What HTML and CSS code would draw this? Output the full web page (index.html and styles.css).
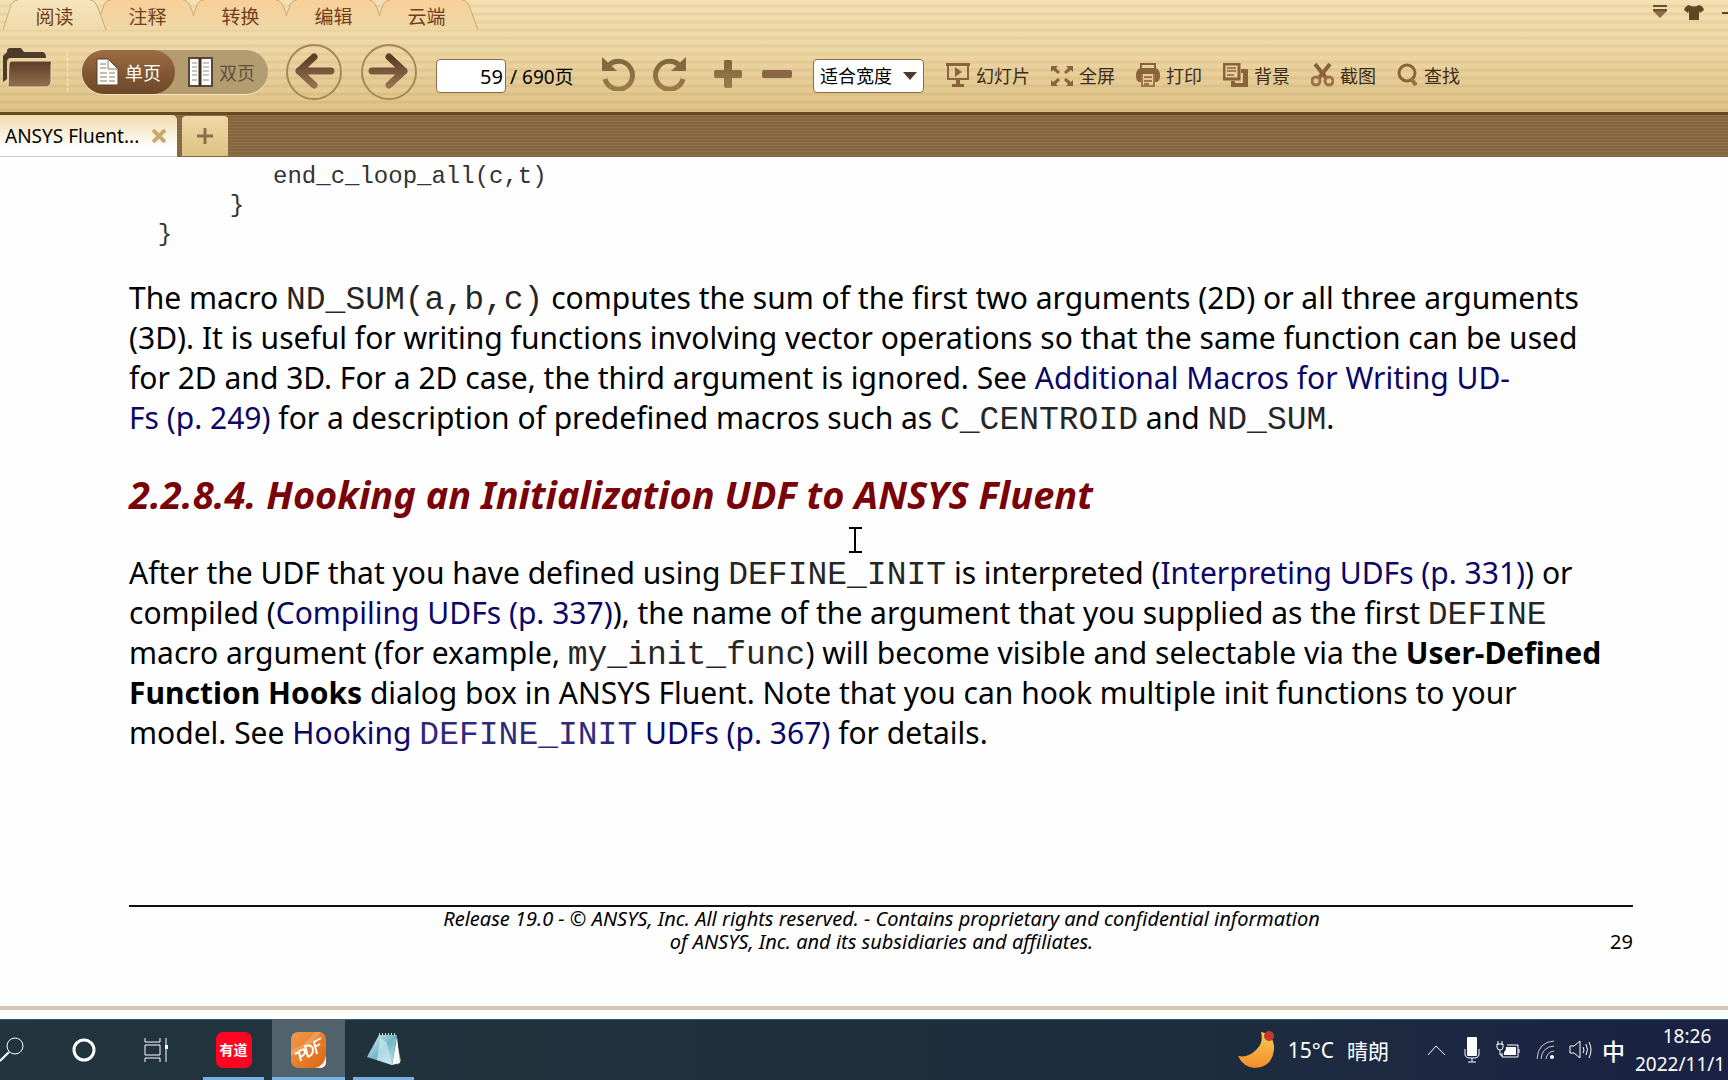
FILE: index.html
```html
<!DOCTYPE html>
<html lang="zh-CN">
<head>
<meta charset="utf-8">
<meta name="viewport" content="width=device-width, initial-scale=1">
<title>ANSYS Fluent UDF Manual</title>
<link rel="stylesheet" href="styles.css">
</head>
<body>
<svg class="defs" aria-hidden="true">
  <defs>
    <linearGradient id="brown" x1="0" y1="0" x2="0" y2="1"><stop offset="0" stop-color="#5a3d26"/><stop offset="1" stop-color="#94704f"/></linearGradient>
    <linearGradient id="olive" x1="0" y1="0" x2="0" y2="1"><stop offset="0" stop-color="#80673c"/><stop offset="1" stop-color="#9a7b49"/></linearGradient>
    <linearGradient id="tabOn" x1="0" y1="0" x2="0" y2="1"><stop offset="0" stop-color="#f6e5bb"/><stop offset="1" stop-color="#efdaab"/></linearGradient>
    <linearGradient id="tabOff" x1="0" y1="0" x2="0" y2="1"><stop offset="0" stop-color="#f8cf98"/><stop offset="1" stop-color="#eed7a6"/></linearGradient>
    <linearGradient id="moon" x1="0" y1="0" x2="0" y2="1"><stop offset="0" stop-color="#f3cf50"/><stop offset="1" stop-color="#f58a2c"/></linearGradient>
    <linearGradient id="pdf" x1="0" y1="0" x2="1" y2="1"><stop offset="0" stop-color="#f19a4a"/><stop offset="1" stop-color="#dd6413"/></linearGradient>
    <linearGradient id="note" x1="0" y1="0" x2="1" y2="1"><stop offset="0" stop-color="#e4f5f8"/><stop offset=".5" stop-color="#71b7c8"/><stop offset="1" stop-color="#c9e8ee"/></linearGradient>
  </defs>
</svg>

<header class="ribbon">
  <div class="menu">
    <nav class="menu-tabs">
      <button class="menu-tab menu-tab-on"><svg class="tab-shape" viewBox="0 0 106 30"><path fill="url(#tabOn)" d="M0 30L7 8Q9 0 15 0H87Q92 0 95 8L103 30Z"/><path class="tab-edge" d="M0 30L7 8Q9 0 15 0M87 0Q92 0 95 8L103 30"/></svg><span>阅读</span></button>
      <button class="menu-tab"><svg class="tab-shape" viewBox="0 0 106 30"><path fill="url(#tabOff)" d="M0 30L7 8Q9 0 15 0H87Q92 0 95 8L103 30Z"/><path class="tab-edge" d="M4 16L7 8Q9 0 15 0M87 0Q92 0 95 8L103 30"/></svg><span>注释</span></button>
      <button class="menu-tab"><svg class="tab-shape" viewBox="0 0 106 30"><path fill="url(#tabOff)" d="M0 30L7 8Q9 0 15 0H87Q92 0 95 8L103 30Z"/><path class="tab-edge" d="M4 16L7 8Q9 0 15 0M87 0Q92 0 95 8L103 30"/></svg><span>转换</span></button>
      <button class="menu-tab"><svg class="tab-shape" viewBox="0 0 106 30"><path fill="url(#tabOff)" d="M0 30L7 8Q9 0 15 0H87Q92 0 95 8L103 30Z"/><path class="tab-edge" d="M4 16L7 8Q9 0 15 0M87 0Q92 0 95 8L103 30"/></svg><span>编辑</span></button>
      <button class="menu-tab"><svg class="tab-shape" viewBox="0 0 106 30"><path fill="url(#tabOff)" d="M0 30L7 8Q9 0 15 0H87Q92 0 95 8L103 30Z"/><path class="tab-edge" d="M4 16L7 8Q9 0 15 0M87 0Q92 0 95 8L103 30"/></svg><span>云端</span></button>
    </nav>
    <div class="window-tools">
      <button aria-label="菜单"><svg width="14" height="14"><path fill="#6b5030" d="M0 0h14v2H0zM0 4h14v2H0z"/><path fill="#8a6c49" d="M0 6h14L7 13z"/></svg></button>
      <button aria-label="皮肤"><svg width="20" height="15"><path fill="#604624" d="M5 0Q10 3 15 0Q19 1 20 5L16 8L15 6V15H5V6L4 8L0 5Q1 1 5 0Z"/></svg></button>
      <button aria-label="最小化"><svg width="12" height="14"><path fill="#604624" d="M1 7h11v2H1z"/></svg></button>
    </div>
  </div>

  <div class="toolbar">
    <button class="open" aria-label="打开"><svg width="50" height="40"><path fill="#4f3b2a" d="M0 34V8L4 4V2Q5 0 7 0H18L21 4H40Q43 5 43 10H8Q4 10 4 14V31Z"/><path fill="url(#brown)" stroke="#f1dcb0" d="M6 16Q6 13 9 13H48Q49 13 48 17V34Q48 38 44 39H5Z"/></svg></button>
    <span class="divider"></span>
    <div class="pages">
      <button class="page-mode page-mode-on"><svg width="23" height="28"><path fill="#fff" stroke="#5c4128" d="M1 1H12L22 11V27H1Z"/><path fill="none" stroke="#8b765e" d="M12 1V11H22M4 6H10M4 10H10M4 15H11M13 15H19M4 19H11M13 19H19M4 23H11M13 23H19"/></svg>单页</button>
      <button class="page-mode"><svg width="25" height="30"><path fill="#fff" stroke="#5c4534" stroke-width="2" d="M1 1H24V29H1Z"/><path stroke="#403022" stroke-width="3" d="M12 1V29"/><path stroke="#9b8b76" d="M4 6H9M4 10H9M4 14H9M4 18H9M4 23H9M15 6H21M15 10H21M15 14H21M15 18H21M15 23H21"/></svg>双页</button>
    </div>
    <button class="turn" aria-label="上一页"><svg width="58" height="58"><circle cx="29" cy="29" r="27" fill="none" stroke="#a5875a" stroke-width="2"/><path fill="none" stroke="url(#brown)" stroke-width="7" stroke-linecap="round" stroke-linejoin="round" d="M29 14L14 28L29 42M14 28L46 28.1"/></svg></button>
    <button class="turn turn-next" aria-label="下一页"><svg width="58" height="58"><circle cx="29" cy="29" r="27" fill="none" stroke="#a5875a" stroke-width="2"/><path fill="none" stroke="url(#brown)" stroke-width="7" stroke-linecap="round" stroke-linejoin="round" d="M29 14L44 28L29 42M44 28L12 28.1"/></svg></button>
    <label class="page-box"><input type="text" value="59" aria-label="页码"><span>/ 690页</span></label>
    <div class="edit">
      <button aria-label="逆时针旋转"><svg width="34" height="34"><path fill="none" stroke="url(#olive)" stroke-width="5" d="M7 8A14 14 0 1 1 3 22"/><path fill="#83683f" d="M0 0L15 14H0Z"/></svg></button>
      <button class="redo" aria-label="顺时针旋转"><svg width="34" height="34"><path fill="none" stroke="url(#olive)" stroke-width="5" d="M27 8A14 14 0 1 0 31 22"/><path fill="#83683f" d="M34 0L19 14H34Z"/></svg></button>
      <button class="plus" aria-label="放大"><svg width="28" height="28"><path fill="url(#olive)" d="M10 1Q10 0 12 0H16Q18 0 18 1V10H26Q28 10 28 12V16Q28 18 26 18H18V27Q18 28 16 28H12Q10 28 10 26V18H2Q0 18 0 16V12Q0 10 2 10H10Z"/></svg></button>
      <button class="minus" aria-label="缩小"><svg width="30" height="28"><rect y="10" width="30" height="8" rx="2" fill="#896746"/></svg></button>
    </div>
    <div class="fit"><select aria-label="缩放"><option>适合宽度</option></select><svg width="14" height="8"><path fill="#4c3a2c" d="M0 0H14L7 8Z"/></svg></div>
    <div class="actions">
      <button><svg width="24" height="24"><path fill="#8a633c" d="M0 0H24V3H0ZM10 17H14V21H18V24H6V21H10Z"/><path fill="none" stroke="#8a633c" stroke-width="2" d="M2 3V16H22V3"/><path fill="#8a633c" d="M9 4V14L16 9Z"/></svg><span>幻灯片</span></button>
      <button class="full"><svg width="22" height="22"><path fill="#8a633c" d="M0 2H7L5 4L9 8L7 10L2 6L0 8ZM22 2H15L17 4L13 8L15 10L20 6L22 8ZM0 22H7L5 20L9 16L7 14L2 18L0 16ZM22 22H15L17 20L13 16L15 14L20 18L22 16Z"/></svg><span>全屏</span></button>
      <button><svg width="24" height="24"><path fill="none" stroke="#8a633c" stroke-width="2" d="M5 7V1H19V7"/><path fill="#8a633c" d="M4 5H20Q24 7 24 12Q24 18 21 19H19V11H5V19H3Q0 18 0 12Q0 7 4 5Z"/><path fill="none" stroke="#9f774b" stroke-width="2" d="M6 11V23H18V11M8 14H16M8 18H16M8 21H13"/></svg><span>打印</span></button>
      <button><svg width="25" height="24"><path fill="#8a633c" d="M18 6H25V24H8V18H12V20H20V10H18Z"/><path fill="none" stroke="#8a633c" stroke-width="3" d="M1 1H16V16H1Z"/><path stroke="#a1835a" stroke-width="2" d="M4 5H13M4 8H13M4 12H11"/></svg><span>背景</span></button>
      <button><svg width="23" height="24"><path fill="none" stroke="#8a633c" stroke-width="4" d="M4 1L16 16M19 1L7 16"/><path fill="none" stroke="#9c7047" stroke-width="3" d="M9 18A4 4 0 1 0 1 18A4 4 0 1 0 9 18M22 18A4 4 0 1 0 14 18A4 4 0 1 0 22 18"/></svg><span>截图</span></button>
      <button class="find"><svg width="21" height="24"><circle cx="10" cy="10" r="8" fill="none" stroke="#8a633c" stroke-width="3"/><path stroke="#9c7047" stroke-width="4" d="M14 16L19 22"/></svg><span>查找</span></button>
    </div>
  </div>
</header>

<div class="files">
  <div class="file"><a href="#manual">ANSYS Fluent...</a><button aria-label="关闭"><svg width="14" height="14"><path stroke="#c8ab6b" stroke-width="4" d="M1 1L13 13M13 1L1 13"/></svg></button></div>
  <button class="file-new" aria-label="新建"><svg width="16" height="16"><path stroke="#8a6f4c" stroke-width="3" d="M8 0V16M0 8H16"/></svg></button>
</div>

<main class="manual" id="manual">
<pre class="listing">          end_c_loop_all(c,t)
       }
  }</pre>
  <p>The macro <code>ND_SUM(a,b,c)</code> computes the sum of the first two arguments (2D) or all three arguments<br>(3D). It is useful for writing functions involving vector operations so that the same function can be used<br>for 2D and 3D. For a 2D case, the third argument is ignored. See <a href="#macros">Additional Macros for Writing UD-<br>Fs (p. 249)</a> for a description of predefined macros such as <code>C_CENTROID</code> and <code>ND_SUM</code>.</p>
  <h2>2.2.8.4. Hooking an Initialization UDF to ANSYS Fluent</h2>
  <p>After the UDF that you have defined using <code>DEFINE_INIT</code> is interpreted (<a href="#interpreting">Interpreting UDFs (p. 331)</a>) or<br>compiled (<a href="#compiling">Compiling UDFs (p. 337)</a>), the name of the argument that you supplied as the first <code>DEFINE</code><br>macro argument (for example, <code>my_init_func</code>) will become visible and selectable via the <b>User-Defined</b><br><b>Function Hooks</b> dialog box in ANSYS Fluent. Note that you can hook multiple init functions to your<br>model. See <a href="#hooking">Hooking <code>DEFINE_INIT</code> UDFs (p. 367)</a> for details.</p>
  <footer class="imprint">
    <p>Release 19.0 - © ANSYS, Inc. All rights reserved. - Contains proprietary and confidential information<br>of ANSYS, Inc. and its subsidiaries and affiliates.</p>
    <span>29</span>
  </footer>
  <svg class="caret" width="13" height="26"><path fill="none" stroke="#000" stroke-width="2" d="M0 1H5M8 1H13M0 25H5M8 25H13M4 1H9M4 25H9M6 1V25"/></svg>
</main>

<div class="taskbar">
  <div class="apps">
    <button class="app app-search" aria-label="搜索"><svg width="25" height="26"><circle cx="15" cy="9" r="8" fill="none" stroke="#fff" stroke-width="1"/><path stroke="#fff" stroke-width="2" d="M9 15L0 24"/></svg></button>
    <button class="app app-ring" aria-label="Cortana"><svg width="24" height="24"><circle cx="12" cy="12" r="10" fill="none" stroke="#fff" stroke-width="3"/></svg></button>
    <button class="app app-view" aria-label="任务视图"><svg width="25" height="24"><path fill="none" stroke="#fff" d="M1 0V4H16V0M1 7H16V17H1ZM1 24V20H16V24M22 0V24"/><path fill="#fff" d="M21 7h3v4h-3z"/></svg></button>
    <button class="app app-open app-youdao"><span class="youdao">有道</span></button>
    <button class="app app-open app-pdf" aria-label="PDF"><svg width="36" height="36"><rect width="35" height="36" rx="7" fill="url(#pdf)"/><path fill="#f7b67a" opacity=".5" d="M0 18Q14 14 24 0H30Q18 18 0 24Z"/><path fill="#fff" d="M35 24V30Q35 36 28 36H24Q33 34 35 24Z"/><path fill="none" stroke="#fff" stroke-width="2" stroke-linejoin="round" d="M10 29L8 20L4 22M7 20Q14 15 14 20Q14 23 9 25M17 25L14 14Q22 12 22 18Q22 23 17 25M26 22L23 10L30 6M24 15L29 12"/></svg></button>
    <button class="app app-open app-note" aria-label="记事本"><svg width="34" height="34"><path fill="#b89560" d="M29 4L34 28L30 32Z"/><path fill="url(#note)" d="M12 2H30L25 32L0 24Z"/><path fill="#f5fbfc" d="M30 4L33 30L25 32Z"/><path fill="#d7eef2" opacity=".6" d="M13 5L10 27L25 32L20 10Z"/><path stroke="#ddd" stroke-width="2" stroke-dasharray="1 2" d="M12 1H30"/></svg></button>
  </div>
  <div class="tray">
    <button class="weather"><svg width="37" height="37"><path fill="url(#moon)" d="M23 1Q37 4 36 19Q34 36 17 37Q5 36 0 25Q10 27 18 19Q26 12 23 1Z"/><circle cx="31" cy="5" r="5" fill="#c33a2c"/></svg><span>15°C</span><span>晴朗</span></button>
    <button class="up" aria-label="显示隐藏的图标"><svg width="19" height="12"><path fill="none" stroke="#fff" stroke-width="1" d="M1 11L9 2L18 11"/></svg></button>
    <button class="mic" aria-label="麦克风"><svg width="16" height="26"><rect x="3" width="10" height="19" rx="1" fill="#fff"/><path fill="none" stroke="#fff" d="M1 12V18Q2 21 5 21H11Q14 21 15 18V12M8 21V25M4 25H12"/></svg></button>
    <button class="power" aria-label="电源"><svg width="24" height="18"><path fill="none" stroke="#fff" d="M11 4H22V16H6V12M2 0V4M6 0V4M4 9V14H7M23 8V12"/><path fill="none" stroke="#fff" d="M1 3H7V6Q7 9 4 9Q1 9 1 6Z"/><path fill="#fff" d="M10 6H20V14H8V11Q10 10 10 6Z"/></svg></button>
    <button class="wifi" aria-label="网络"><svg width="19" height="20"><path fill="none" stroke="#fff" opacity=".75" d="M1 19Q2 2 18 1M5 19Q6 7 18 6M10 19Q11 12 18 11"/><circle cx="16" cy="17" r="2" fill="#fff"/></svg></button>
    <button class="sound" aria-label="音量"><svg width="23" height="20"><path fill="none" stroke="#fff" d="M1 6H5L11 1V18L5 13H1ZM14 7Q16 10 14 13M17 4Q20 10 17 15M20 2Q24 10 20 18"/></svg></button>
    <button class="ime">中</button>
    <button class="clock"><span>18:26</span><span class="date">2022/11/1</span></button>
  </div>
</div>
</body>
</html>
```

FILE: styles.css
```css
* {
  box-sizing: border-box;
}

body {
  margin: 0;
  min-height: 100vh;
  display: flex;
  flex-direction: column;
  overflow-x: hidden;
  background: #fefefe;
  color: #000;
  font-family: "Noto Sans", "Noto Sans CJK SC", sans-serif;
}

button {
  display: flex;
  align-items: center;
  justify-content: center;
  padding: 0;
  border: 0;
  background: none;
  color: inherit;
  font: inherit;
  white-space: nowrap;
}

svg {
  display: block;
  flex: none;
}

.defs {
  position: absolute;
  width: 0;
  height: 0;
}

/* Ribbon */

.ribbon {
  height: 115px;
  border-bottom: 3px solid #67481f;
  background:
    repeating-linear-gradient(rgba(255, 240, 200, 0.12) 0 4px, rgba(190, 150, 80, 0.12) 5px 7px, rgba(255, 240, 200, 0.12) 8px),
    linear-gradient(#f2deb0, #ebd3a0 45%, #d9bd82);
}

.menu {
  display: flex;
  justify-content: space-between;
  height: 30px;
}

.menu-tabs {
  display: flex;
  padding-left: 8px;
  color: #713d1b;
  font-size: 19px;
}

.menu-tab {
  position: relative;
  width: 93px;
  height: 30px;
  padding-top: 2px;
}

.menu-tab span {
  position: relative;
}

.menu-tab-on {
  z-index: 1;
}

.tab-shape {
  position: absolute;
  top: 0;
  left: -5px;
  width: 106px;
  height: 30px;
}

.tab-edge {
  fill: none;
  stroke: #c9a878;
}

.window-tools {
  display: flex;
  align-items: flex-start;
  gap: 17px;
  padding-top: 5px;
  margin-right: -5px;
}

.toolbar {
  display: flex;
  align-items: center;
  height: 84px;
  padding-left: 3px;
}

.open {
  margin-top: -8px;
}

.divider {
  height: 38px;
  margin: 0 14px;
  border-left: 1px dashed #fff3d0;
}

.pages {
  display: flex;
  height: 44px;
  border-radius: 22px;
  background: #b39c70;
  box-shadow: 0 1px 1px #f6e5bd;
}

.page-mode {
  gap: 6px;
  width: 93px;
  color: #62503b;
  font-size: 18px;
}

.page-mode-on {
  border-radius: 22px;
  background: linear-gradient(#9a6c42, #6d4728);
  color: #fff;
}

.turn {
  margin-left: 17px;
}

.page-box {
  display: flex;
  align-items: center;
  gap: 4px;
  width: 138px;
  margin: 8px 0 0 18px;
  font-size: 19px;
  white-space: nowrap;
}

.page-box input,
.fit select {
  height: 34px;
  border: 1px solid #8c6c49;
  border-radius: 4px;
  background: #fff;
  color: #000;
  font: inherit;
}

.page-box input {
  width: 70px;
  padding: 0 2px;
  font-size: 20px;
  text-align: right;
}

.edit {
  display: flex;
  align-items: center;
  margin: 4px 0 0 28px;
}

.redo {
  margin-left: 16px;
}

.plus {
  margin-left: 28px;
}

.minus {
  margin-left: 20px;
}

.fit {
  display: flex;
  align-items: center;
  width: 111px;
  margin: 8px 0 0 21px;
  font-size: 18px;
}

.fit select {
  width: 111px;
  padding: 0 6px;
  appearance: none;
}

.fit svg {
  margin-left: -21px;
  pointer-events: none;
}

.actions {
  display: flex;
  gap: 21px;
  margin: 5px 0 0 22px;
  color: #3b2c1c;
  font-size: 18px;
}

.actions button {
  gap: 6px;
}

/* Open files */

.files {
  display: flex;
  gap: 5px;
  height: 42px;
  background: repeating-linear-gradient(#8d6f48 0 1px, #7c603a 2px, #8d6f48 3px);
}

.file {
  display: flex;
  align-items: center;
  justify-content: space-between;
  width: 177px;
  padding: 0 11px 0 5px;
  border-bottom: 1px solid #ccc;
  border-radius: 0 5px 0 0;
  background: linear-gradient(#f1dbac, #fff 80%);
  font-size: 19px;
}

.file a {
  color: #000;
  text-decoration: none;
}

.file-new {
  width: 46px;
  height: 40px;
  margin-top: 1px;
  border-radius: 4px 4px 0 0;
  background: linear-gradient(#eed8a6, #dec183);
}

/* Document */

.manual {
  position: relative;
  flex: 1;
  padding: 5px 95px 0 129px;
  font-size: 30px;
  line-height: 40px;
}

.manual p,
.manual h2,
.manual pre {
  margin: 0;
  white-space: pre;
}

.manual a {
  color: #0a0566;
  text-decoration: none;
}

.manual code {
  opacity: 0.85;
  font-size: 33px;
  line-height: 32px;
}

.manual code,
.manual .listing {
  font-family: "Liberation Mono", monospace;
}

.manual .listing {
  margin-bottom: 29px;
  color: #333;
  font-size: 24px;
  line-height: 29px;
}

.manual h2 {
  padding: 32px 0 35px;
  color: #790306;
  font-size: 38px;
  font-style: italic;
  line-height: 48px;
}

.imprint {
  display: flex;
  align-items: flex-end;
  justify-content: space-between;
  margin-top: 152px;
  border-top: 2px solid #111;
  font-size: 20px;
  line-height: 23px;
}

.imprint p {
  flex: 1;
  padding-left: 24px;
  font-style: italic;
  text-align: center;
}

.caret {
  position: absolute;
  top: 370px;
  left: 849px;
}

/* Taskbar */

.taskbar {
  display: flex;
  justify-content: space-between;
  height: 74px;
  border-top: 4px solid #d5c8b0;
  background: linear-gradient(#fefefe 0 9px, #246174 9px 10px, transparent 10px), linear-gradient(90deg, #22343d, #1f303c 45%, #1d2b40 75%, #1a2143);
  padding-top: 9px;
  color: #fff;
}

.apps,
.tray {
  display: flex;
  align-items: center;
}

.app {
  height: 61px;
  padding-top: 3px;
  border-bottom: 3px solid transparent;
}

.app-ring {
  margin-left: 47px;
}

.app-view {
  margin: 0 34px 0 48px;
}

.app-open {
  width: 61px;
  border-color: #79b0e3;
}

.app-pdf {
  width: 73px;
  margin: 0 8px;
  background: #50626b;
}

.youdao {
  width: 36px;
  border-radius: 7px;
  background: #fb0523;
  font-size: 14px;
  font-weight: 700;
  line-height: 36px;
}

.weather {
  gap: 13px;
  margin-right: 38px;
  font-size: 21px;
}

.mic {
  margin: 0 16px 0 18px;
}

.wifi {
  margin: 0 14px 0 16px;
}

.ime {
  margin: 0 10px;
  font-size: 23px;
  font-weight: 500;
}

.clock {
  flex-direction: column;
  width: 104px;
  margin-right: -11px;
  font-size: 19px;
  line-height: 28px;
}

.date {
  align-self: flex-start;
}
```
